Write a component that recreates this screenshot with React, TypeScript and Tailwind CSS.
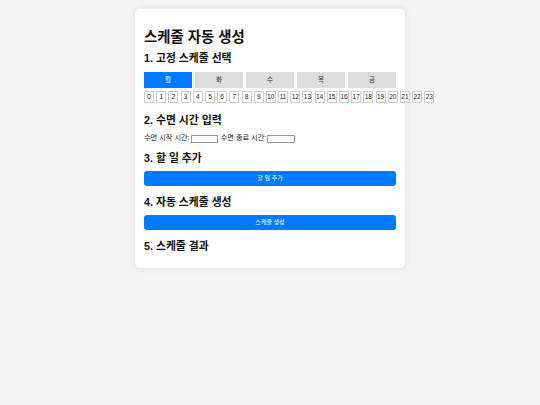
import React from 'react';

const font = { fontFamily: '"Liberation Sans", "Noto Sans CJK KR", sans-serif' };

const App = () => {
  const days = ['월', '화', '수', '목', '금'];
  const hours = Array.from({ length: 24 }, (_, i) => i);

  return (
    <div className="min-h-[405px] w-[540px] bg-[#f4f4f4]" style={font}>
      <div className="pt-[9px]">
        <div className="mx-auto w-[270px] rounded-[5px] bg-white px-[9px] pt-[18px] pb-[14.5px] shadow-[0_0_6px_rgba(0,0,0,0.1)]">
          <h1 className="text-[14.4px] leading-[20px] font-bold text-[#111]">스케줄 자동 생성</h1>

          <h2 className="mt-[4px] text-[10.8px] leading-[15px] font-bold text-[#111]">1. 고정 스케줄 선택</h2>
          <div className="mt-[6px] flex gap-[3px]">
            {days.map((d, i) => (
              <div
                key={d}
                className={`flex h-[16px] w-[48px] items-center justify-center text-[6.5px] ${
                  i === 0 ? 'bg-[#007bff] text-white' : 'bg-[#dddddd] text-[#333]'
                }`}
              >
                {d}
              </div>
            ))}
          </div>
          <div className="mt-[3px] flex gap-[2.2px] whitespace-nowrap">
            {hours.map((h) => (
              <div
                key={h}
                className="flex h-[12px] w-[10px] shrink-0 items-center justify-center border border-[#cccccc] bg-white text-[6.5px] text-[#222]"
              >
                {h}
              </div>
            ))}
          </div>

          <h2 className="mt-[9.5px] text-[10.8px] leading-[15px] font-bold text-[#111]">2. 수면 시간 입력</h2>
          <div className="mt-[5.5px] flex h-[11px] items-center text-[7.2px] text-[#222]">
            <span>수면 시작 시간:</span>
            <span className="ml-[1px] inline-block h-[8px] w-[27px] border border-[#999] bg-white" />
            <span className="ml-[3px]">수면 종료 시간:</span>
            <span className="ml-[1px] inline-block h-[8px] w-[28px] border border-[#999] bg-white" />
          </div>

          <h2 className="mt-[6.5px] text-[10.8px] leading-[15px] font-bold text-[#111]">3. 할 일 추가</h2>
          <button className="mt-[5.5px] flex h-[15px] w-full items-center justify-center rounded-[3px] bg-[#007bff] text-[6px] text-white">
            할 일 추가
          </button>

          <h2 className="mt-[8.5px] text-[10.8px] leading-[15px] font-bold text-[#111]">4. 자동 스케줄 생성</h2>
          <button className="mt-[5.5px] flex h-[15px] w-full items-center justify-center rounded-[3px] bg-[#007bff] text-[6px] text-white">
            스케줄 생성
          </button>

          <h2 className="mt-[8.5px] text-[10.8px] leading-[15px] font-bold text-[#111]">5. 스케줄 결과</h2>
        </div>
      </div>
    </div>
  );
};

export default App;
